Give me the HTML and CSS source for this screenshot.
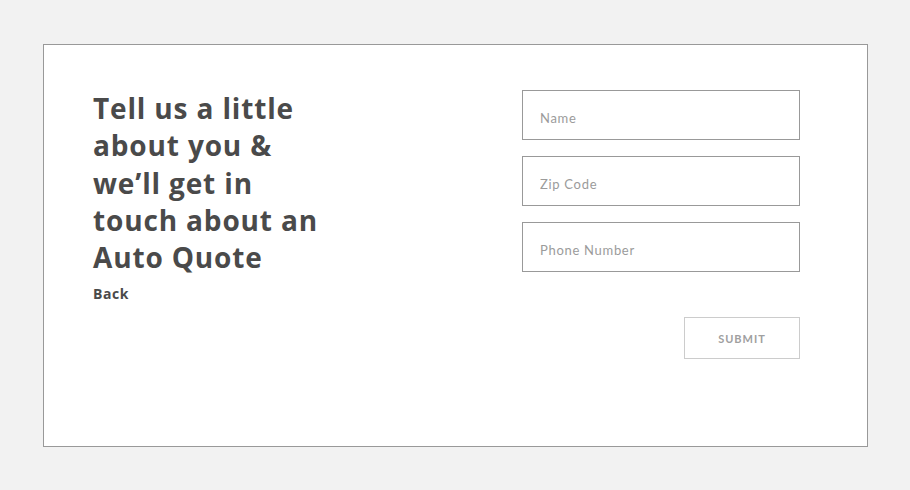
FILE: index.html
```html
<!DOCTYPE html>
<html lang="en">
<head>
    <meta charset="UTF-8">
    <meta name="viewport" content="width=device-width, initial-scale=1.0">
    <title>Auto Quote</title>
    <link rel="stylesheet" href="styles.css">
</head>
<body>
    <div class="quote-card">
        <!-- 왼쪽 안내 문구 -->
        <div class="quote-intro">
            <h1 class="quote-title">Tell us a little about you &amp; we’ll get in touch about an Auto Quote</h1>
            <a class="back-link" href="#">Back</a>
        </div>

        <!-- 오른쪽 입력 폼 -->
        <form class="quote-form">
            <input class="field" type="text" placeholder="Name">
            <input class="field" type="text" placeholder="Zip Code">
            <input class="field" type="tel" placeholder="Phone Number">
            <button class="submit-button" type="button">Submit</button>
        </form>
    </div>
</body>
</html>
```

FILE: styles.css
```css
* {
    margin: 0;
    padding: 0;
    box-sizing: border-box;
    font-family: 'Lato', 'Open Sans', 'Liberation Sans', sans-serif;
}

:root {
    --bg-color: #f2f2f2;
    --text-color: #4a4a4a;
    --border-color: #999999;
    --muted-color: #9b9b9b;
}

body {
    background-color: var(--bg-color);
    padding: 44px 42px 43px 43px;
}

.quote-card {
    width: 825px;
    height: 403px;
    background-color: #ffffff;
    border: 1px solid var(--border-color);
    padding: 45px 67px 0 49px;
    display: flex;
    justify-content: space-between;
}

.quote-title {
    width: 245px;
    font-family: 'Open Sans', 'Lato', sans-serif;
    font-size: 28px;
    font-weight: 700;
    line-height: 37.3px;
    letter-spacing: 0.85px;
    color: var(--text-color);
}

.back-link {
    display: block;
    margin-top: 8px;
    font-family: 'Open Sans', 'Lato', sans-serif;
    font-size: 14px;
    font-weight: 700;
    line-height: 20px;
    letter-spacing: 0.6px;
    color: var(--text-color);
    text-decoration: none;
}

.quote-form {
    width: 278px;
    display: flex;
    flex-direction: column;
    align-items: flex-end;
    gap: 16px;
}

.field {
    width: 100%;
    height: 50px;
    border: 1px solid var(--border-color);
    border-radius: 0;
    padding: 6px 17px 0;
    font-size: 13px;
    letter-spacing: 0.7px;
    color: var(--text-color);
    outline: none;
}

.field::placeholder {
    color: var(--muted-color);
}

.submit-button {
    margin-top: 29px;
    width: 116px;
    height: 42px;
    background-color: #ffffff;
    border: 1px solid #cccccc;
    font-size: 11px;
    font-weight: 700;
    letter-spacing: 1px;
    text-transform: uppercase;
    color: #a0a0a0;
    cursor: pointer;
}
```
